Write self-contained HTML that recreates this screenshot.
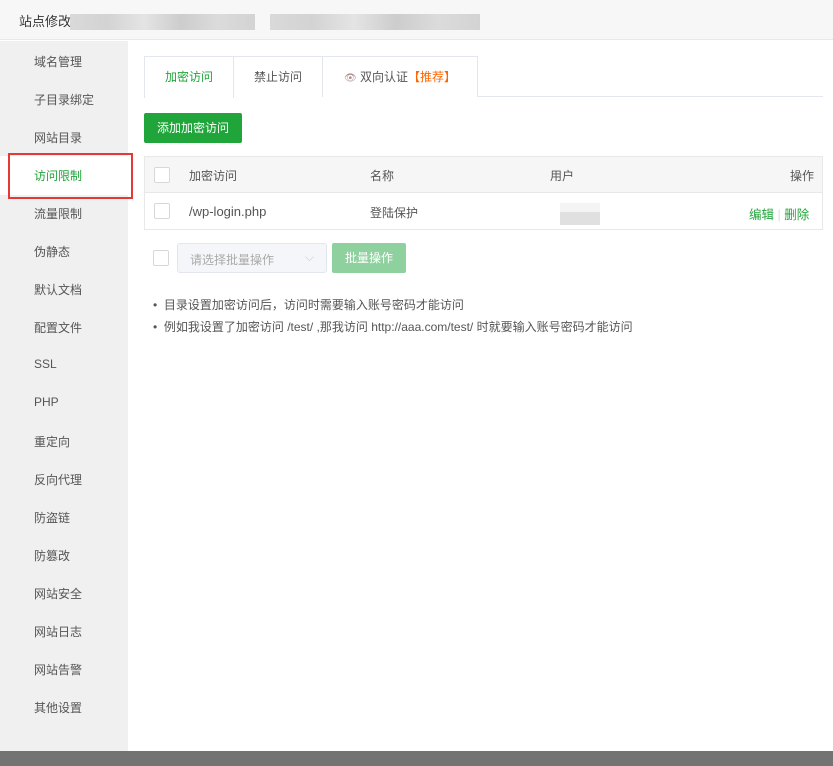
<!DOCTYPE html>
<html><head><meta charset="utf-8"><style>
*{box-sizing:border-box;margin:0;padding:0}
body{width:833px;height:766px;overflow:hidden;background:#fff;font-family:"Liberation Sans","Noto Sans CJK SC",sans-serif;font-size:12px;color:#555;position:relative}
.hdr{position:absolute;left:0;top:0;width:833px;height:40px;background:#f7f7f7;border-bottom:1px solid #e8e8e8}
.hdr .t{position:absolute;left:19px;top:11px;font-size:13px;color:#333}
.blur{position:absolute;top:14px;height:16px;background:linear-gradient(90deg,#d6d6d6,#cfcfcf,#e2e2e2,#c8c8c8,#d8d8d8,#cfcfcf);opacity:.9}
.side{position:absolute;left:0;top:41px;width:128px;height:710px;background:#f0f0f0}
.side .i{position:absolute;left:34px;font-size:12px;color:#555}
.side .act{position:absolute;left:0;top:115px;width:128px;height:39px;background:#fff}
.red{position:absolute;left:8px;top:153px;width:125px;height:46px;border:2px solid #e53935}
.bot{position:absolute;left:0;top:751px;width:833px;height:15px;background:#737373}
.tabs{position:absolute;left:144px;top:56px;height:41px;width:679px;border-bottom:1px solid #e4e6ef}
.tab{position:absolute;top:0;height:41px;border:1px solid #e4e6ef;border-bottom:none;background:#fff;line-height:40px;text-align:center;font-size:12px;color:#555}
.btn{position:absolute;left:144px;top:113px;width:98px;height:30px;background:#20a53a;color:#fff;border-radius:2px;line-height:30px;text-align:center;font-size:12px}
.tbl{position:absolute;left:144px;top:156px;width:679px;height:74px;border:1px solid #e8e8e8}
.th{position:absolute;left:0;top:0;width:677px;height:36px;background:#f6f6f6;border-bottom:1px solid #e8e8e8}
.cb{position:absolute;width:16px;height:16px;border:1px solid #d8d8d8;background:#fff;border-radius:2px}
.abs{position:absolute}
</style></head><body>
<div class="hdr"><span class="t">站点修改</span>
<div class="blur" style="left:70px;width:185px"></div>
<div class="blur" style="left:270px;width:210px"></div></div>
<div class="side">
<div class="act"></div>
<div class="i" style="top:12px">域名管理</div><div class="i" style="top:50px">子目录绑定</div><div class="i" style="top:88px">网站目录</div>
<div class="i" style="top:126px;color:#20a53a">访问限制</div><div class="i" style="top:164px">流量限制</div><div class="i" style="top:202px">伪静态</div>
<div class="i" style="top:240px">默认文档</div><div class="i" style="top:278px">配置文件</div><div class="i" style="top:316px">SSL</div>
<div class="i" style="top:354px">PHP</div><div class="i" style="top:392px">重定向</div><div class="i" style="top:430px">反向代理</div>
<div class="i" style="top:468px">防盗链</div><div class="i" style="top:506px">防篡改</div><div class="i" style="top:544px">网站安全</div>
<div class="i" style="top:582px">网站日志</div><div class="i" style="top:620px">网站告警</div><div class="i" style="top:658px">其他设置</div>
</div>
<div class="red"></div>
<div class="tabs">
<div class="tab" style="left:0;width:90px;color:#20a53a;height:42px">加密访问</div>
<div class="tab" style="left:89px;width:90px">禁止访问</div>
<div class="tab" style="left:178px;width:156px"><span style="color:#a88;font-size:10px">👁</span> 双向认证<span style="color:#f60">【推荐】</span></div>
</div>
<div class="btn">添加加密访问</div>
<div class="tbl">
<div class="th"></div>
<div class="cb" style="left:9px;top:10px"></div>
<div class="abs" style="left:44px;top:10px">加密访问</div>
<div class="abs" style="left:225px;top:10px">名称</div>
<div class="abs" style="left:405px;top:10px">用户</div>
<div class="abs" style="left:645px;top:10px">操作</div>
<div class="cb" style="left:9px;top:46px"></div>
<div class="abs" style="left:44px;top:47px;font-size:13px">/wp-login.php</div>
<div class="abs" style="left:225px;top:47px">登陆保护</div>
<div class="abs" style="left:415px;top:46px;width:40px;height:22px;background:linear-gradient(#f4f4f4 40%,#e0e0e0 40%)"></div>
<div class="abs" style="left:604px;top:47px;color:#20a53a;font-size:12.5px">编辑 <span style="color:#ddd">|</span> 删除</div>
</div>
<div class="cb" style="left:153px;top:250px"></div>
<div class="abs" style="left:177px;top:243px;width:150px;height:30px;border:1px solid #e4e6ef;background:#f5f6fa;border-radius:3px;color:#aaa;padding:7px 0 0 12px">请选择批量操作<span style="position:absolute;right:12px;top:6px;color:#ccc">⌵</span></div>
<div class="abs" style="left:332px;top:243px;width:74px;height:30px;background:#8fd19e;color:#fff;border-radius:2px;line-height:30px;text-align:center">批量操作</div>
<div class="abs" style="left:153px;top:296px">•&nbsp; 目录设置加密访问后，访问时需要输入账号密码才能访问</div>
<div class="abs" style="left:153px;top:318px">•&nbsp; 例如我设置了加密访问 /test/ ,那我访问 http://aaa.com/test/ 时就要输入账号密码才能访问</div>
<div class="bot"></div>
</body></html>
